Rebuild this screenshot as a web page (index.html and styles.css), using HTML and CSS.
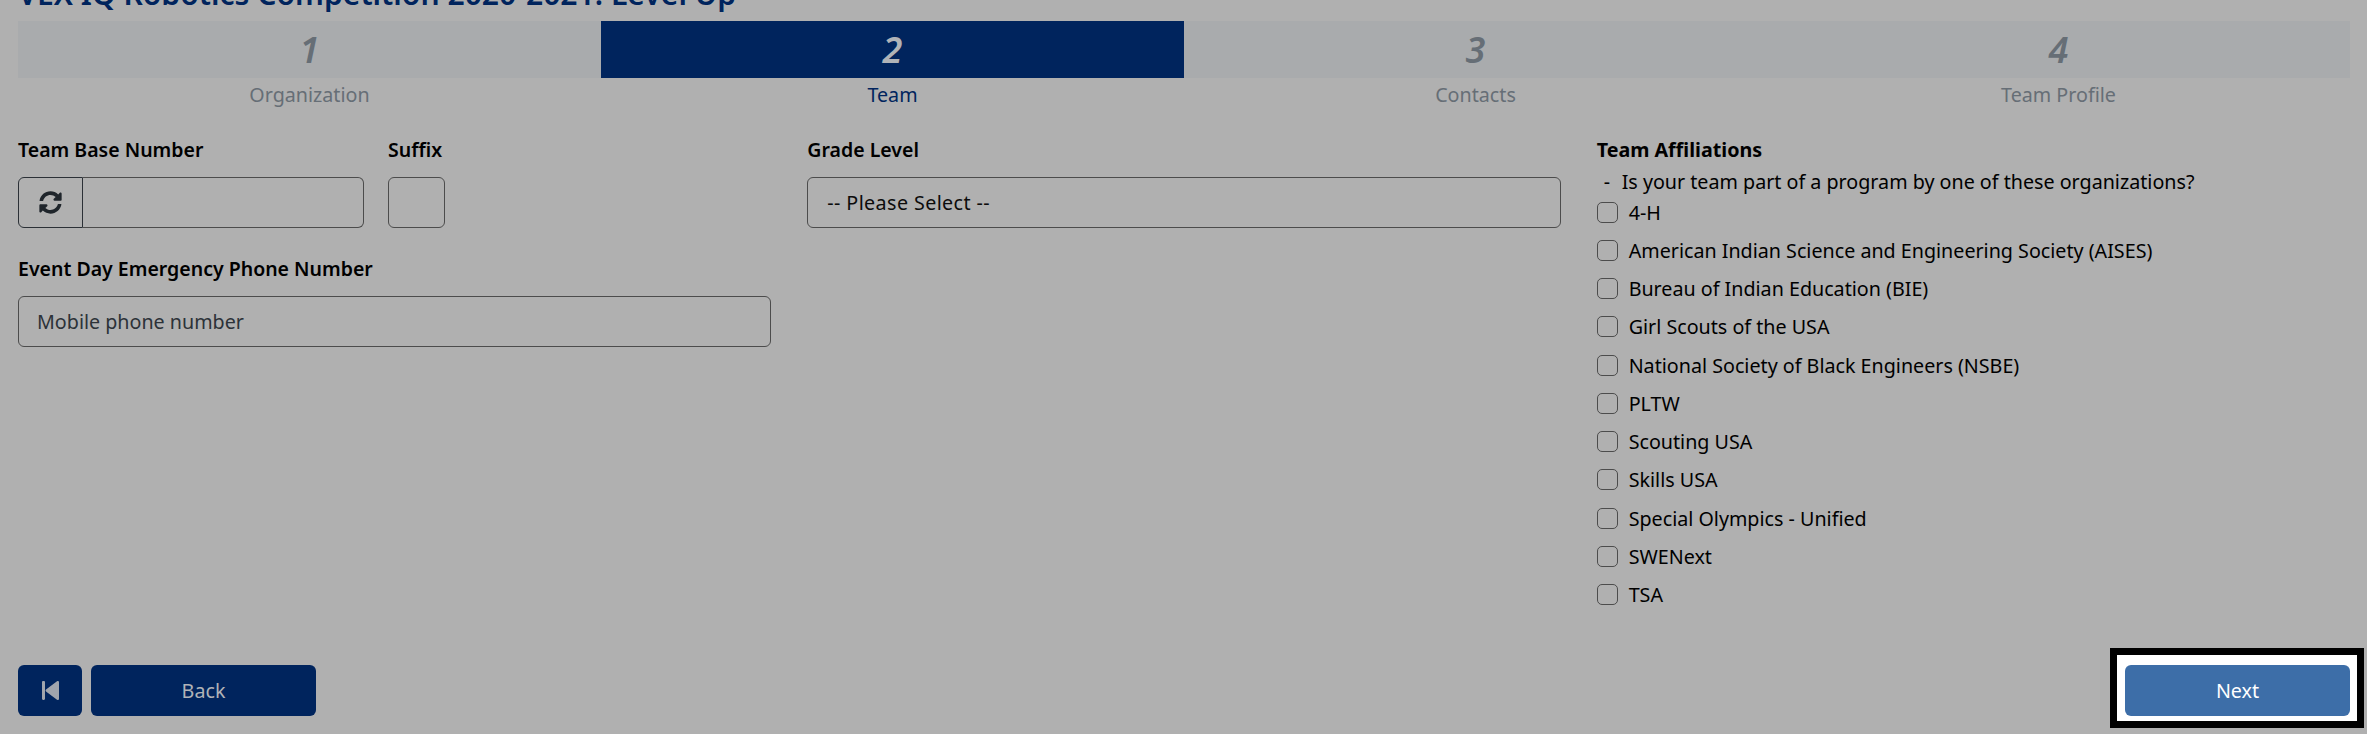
FILE: index.html
```html
<!DOCTYPE html>
<html lang="en">
<head>
<meta charset="utf-8">
<title>Team registration</title>
<link rel="stylesheet" href="styles.css">
</head>
<body>
<main class="page">
  <h1 class="title">VEX IQ Robotics Competition 2020-2021: Level Up</h1>
  <ol class="stepper">
    <li class="step"><span class="step-num">1</span><span class="step-name">Organization</span></li>
    <li class="step is-active"><span class="step-num">2</span><span class="step-name">Team</span></li>
    <li class="step"><span class="step-num">3</span><span class="step-name">Contacts</span></li>
    <li class="step"><span class="step-num">4</span><span class="step-name">Team Profile</span></li>
  </ol>
  <form class="form-grid">
    <section class="col">
      <div class="row-number">
        <div class="field field-base">
          <label class="label">Team Base Number</label>
          <div class="input-group">
            <button type="button" class="addon" aria-label="Refresh">
              <svg class="icon-sync" viewBox="0 0 512 512"><path d="M370.72 133.28C339.458 104.008 298.888 87.962 255.848 88c-77.458.068-144.328 53.178-162.791 126.85-1.344 5.363-6.122 9.15-11.651 9.15H24.103c-7.498 0-13.194-6.807-11.807-14.176C33.933 94.924 134.813 8 256 8c66.448 0 126.791 26.136 171.315 68.685L463.03 40.97C478.149 25.851 504 36.559 504 57.941V192c0 13.255-10.745 24-24 24H345.941c-21.382 0-32.09-25.851-16.971-40.971l41.75-41.749zM32 296h134.059c21.382 0 32.09 25.851 16.971 40.971l-41.75 41.75c31.262 29.273 71.835 45.319 114.876 45.28 77.418-.07 144.315-53.144 162.787-126.849 1.344-5.363 6.122-9.15 11.651-9.15h57.304c7.498 0 13.194 6.807 11.807 14.176C478.067 417.076 377.187 504 256 504c-66.448 0-126.791-26.136-171.315-68.685L48.97 471.03C33.851 486.149 8 475.441 8 454.059V320c0-13.255 10.745-24 24-24z"/></svg>
            </button>
            <input class="input input-joined" type="text">
          </div>
        </div>
        <div class="field field-suffix">
          <label class="label">Suffix</label>
          <input class="input" type="text">
        </div>
      </div>
      <div class="field field-phone">
        <label class="label">Event Day Emergency Phone Number</label>
        <input class="input" type="text" placeholder="Mobile phone number">
      </div>
    </section>
    <section class="col">
      <div class="field">
        <label class="label">Grade Level</label>
        <div class="input select-box">-- Please Select --</div>
      </div>
    </section>
    <section class="col">
      <div class="label label-strong">Team Affiliations</div>
      <p class="help"><span class="help-dash">-</span>Is your team part of a program by one of these organizations?</p>
      <ul class="checks">
        <li class="check"><span class="box"></span>4-H</li>
        <li class="check"><span class="box"></span>American Indian Science and Engineering Society (AISES)</li>
        <li class="check"><span class="box"></span>Bureau of Indian Education (BIE)</li>
        <li class="check"><span class="box"></span>Girl Scouts of the USA</li>
        <li class="check"><span class="box"></span>National Society of Black Engineers (NSBE)</li>
        <li class="check"><span class="box"></span>PLTW</li>
        <li class="check"><span class="box"></span>Scouting USA</li>
        <li class="check"><span class="box"></span>Skills USA</li>
        <li class="check"><span class="box"></span>Special Olympics - Unified</li>
        <li class="check"><span class="box"></span>SWENext</li>
        <li class="check"><span class="box"></span>TSA</li>
      </ul>
    </section>
  </form>
  <footer class="actions">
    <div class="actions-left">
      <button type="button" class="btn btn-icon" aria-label="First">
        <svg class="icon-first" viewBox="0 0 17 19"><path d="M0 1.2C0 .5.5 0 1.2 0h.6C2.500 0 3 .5 3 1.200v16.600c0 .7-.5 1.200-1.200 1.200h-.6C.5 19 0 18.500 0 17.800zM4 8.600 15 .3c.9-.6 2-.1 2 1v16.400c0 1.100-1.100 1.600-2 1L4 10.400c-.6-.5-.6-1.300 0-1.800z"/></svg>
      </button>
      <button type="button" class="btn btn-back">Back</button>
    </div>
    <button type="button" class="btn btn-next">Next</button>
  </footer>
</main>
<div class="spotlight"></div>
</body>
</html>
```
FILE: styles.css
```css
* { box-sizing: border-box; }
html, body { margin: 0; padding: 0; height: 734px; overflow: hidden; background: #b0b0b0; }
body { font-family: "Noto Sans", "Open Sans", sans-serif; font-size: 19.7px; color: #000; position: relative; }
.page { padding: 0 17px 0 18px; }
.title { margin: -24px 0 0; height: 45px; line-height: 36px; font-size: 30.1px; font-weight: 600; color: #00245d; white-space: nowrap; }
.stepper { list-style: none; margin: 0; padding: 0; display: grid; grid-template-columns: repeat(4, 1fr); }
.step { display: flex; flex-direction: column; align-items: center; color: #666e76; }
.step-num { width: 100%; height: 57px; line-height: 57px; text-align: center; background: #a9abad; font-size: 36px; font-weight: 600; font-style: italic; }
.step-name { height: 34px; line-height: 34px; }
.is-active .step-num { background: #00245d; color: #b0b3b7; }
.is-active .step-name { color: #00245d; }
.form-grid { display: grid; grid-template-columns: repeat(3, 1fr); column-gap: 36px; margin-top: 21px; height: 532px; }
.col { min-width: 0; }
.label { display: block; height: 44px; line-height: 34px; font-weight: 600; font-size: 19.5px; }
.label-strong { font-weight: 700; height: 36px; font-size: 19.7px; }
.row-number { display: flex; gap: 24px; }
.field-base { width: 346px; }
.field-suffix { width: 57px; }
.field-phone { margin-top: 24px; width: 753px; }
.input { display: block; width: 100%; height: 51px; border: 1.5px solid #4c4c4c; border-radius: 6px; background: transparent; padding: 0 18px; font: inherit; color: #000; outline: none; }
.input::placeholder { color: #2c3238; opacity: 1; }
.select-box { display: flex; align-items: center; padding: 0 19px; color: #0c0c0c; letter-spacing: .4px; }
.input-group { display: flex; }
.addon { width: 65px; height: 51px; flex: none; padding: 0; display: flex; align-items: center; justify-content: center; background: transparent; border: 1.5px solid #2b3036; border-radius: 6px 0 0 6px; }
.input-joined { flex: 1; border-left: 0; border-radius: 0 6px 6px 0; }
.icon-sync { width: 23px; height: 23px; fill: #1f252b; }
.help { margin: 0; height: 24px; line-height: 26px; white-space: nowrap; color: #000; }
.help-dash { display: inline-block; width: 25px; padding-left: 7px; }
.checks { list-style: none; margin: 0; padding: 0; }
.check { display: flex; align-items: center; gap: 11px; height: 38.25px; white-space: nowrap; }
.box { width: 21px; height: 21px; flex: none; border: 1.5px solid #4c4c4c; border-radius: 5px; }
.actions { display: flex; justify-content: space-between; align-items: flex-start; }
.actions-left { display: flex; gap: 9px; }
.btn { height: 51px; border: 0; border-radius: 6px; background: #00245d; color: #b0b3b7; font: inherit; padding: 0; display: flex; align-items: center; justify-content: center; }
.btn-icon { width: 64px; }
.btn-back { width: 225px; }
.btn-next { width: 225px; background: #3d6ea8; color: #fff; position: relative; z-index: 2; }
.icon-first { width: 17px; height: 19px; fill: #a0a5ad; margin-left: 1px; }
.spotlight { position: absolute; left: 2110px; top: 648px; width: 254px; height: 80px; border: 7px solid #000; background: #fff; z-index: 1; }
```
